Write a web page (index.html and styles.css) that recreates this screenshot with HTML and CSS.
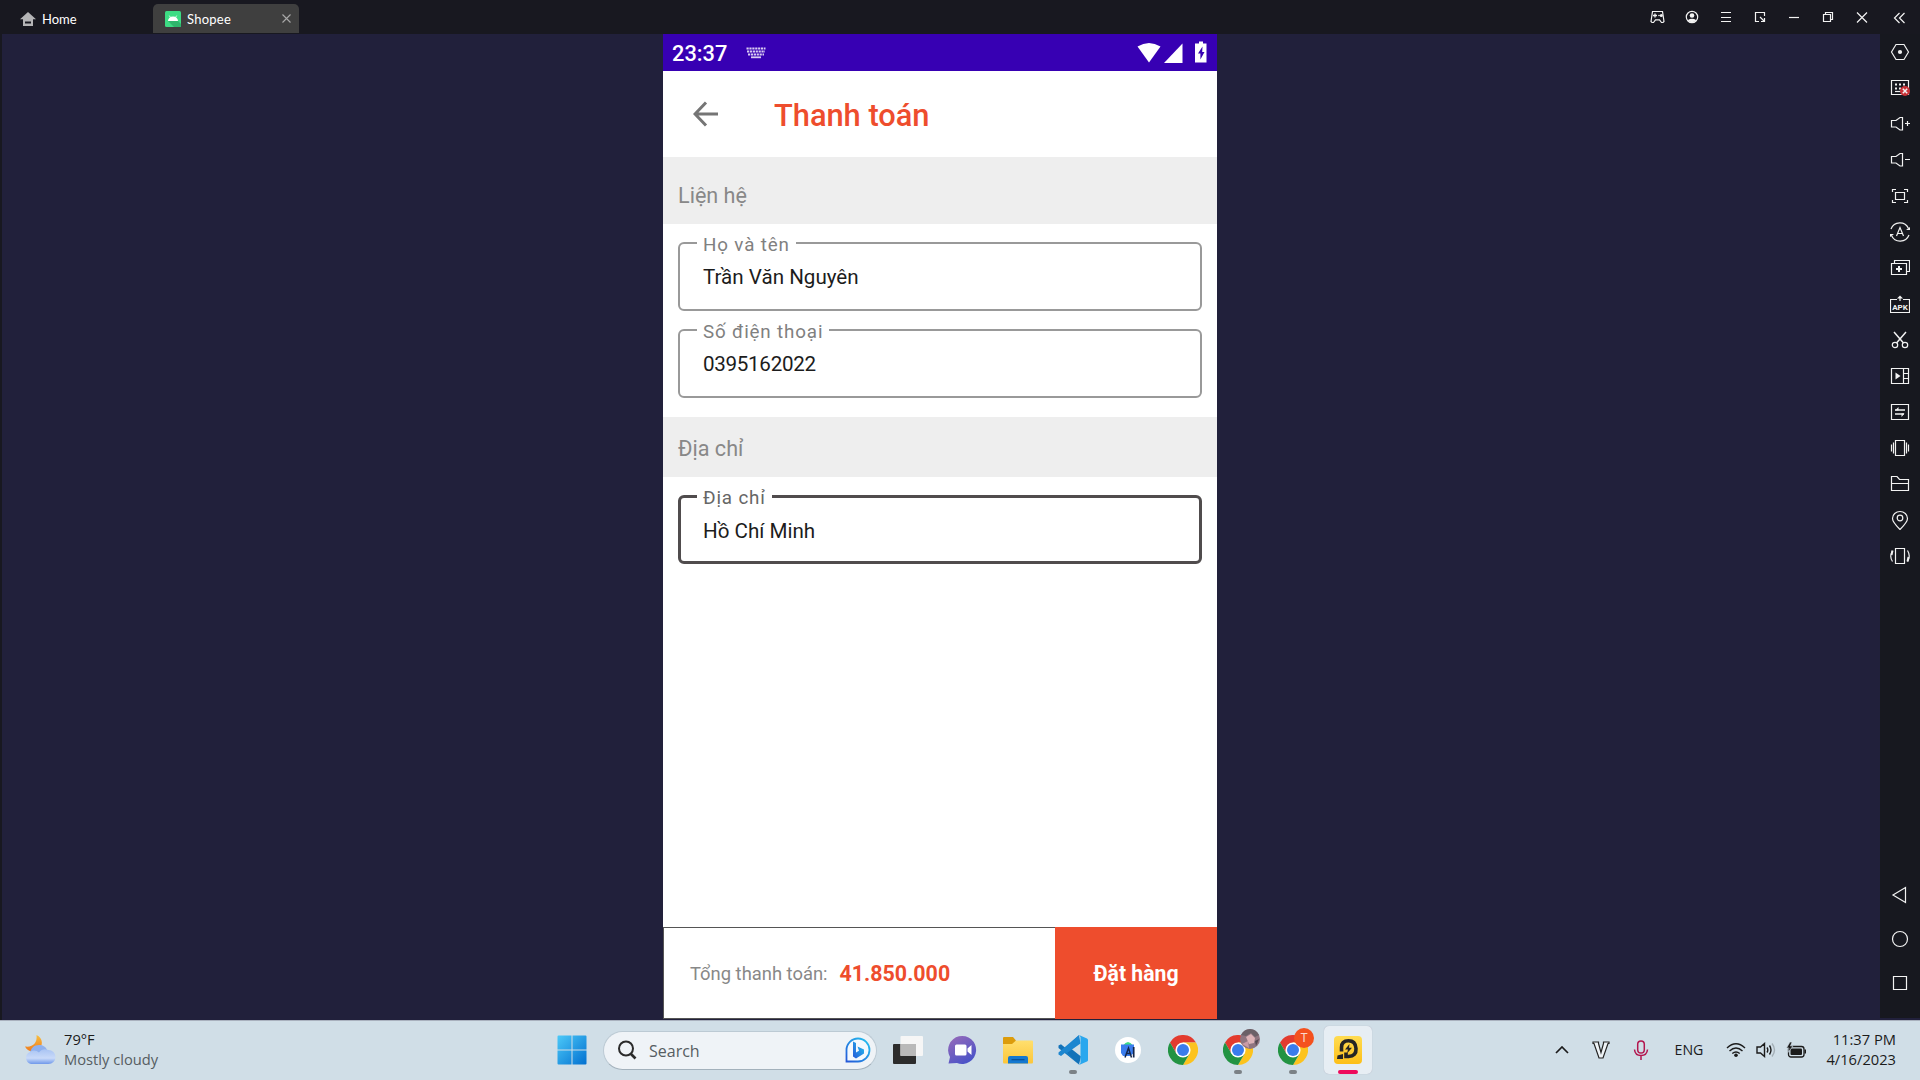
FILE: index.html
```html
<!DOCTYPE html>
<html lang="vi">
<head>
<meta charset="utf-8">
<title>Shopee</title>
<link rel="stylesheet" href="styles.css">
</head>
<body>
<header class="titlebar">
  <div class="home-tab">
    <svg width="16" height="14" viewBox="0 0 16 14"><path d="M8 0 16 7.2H13V14H3V7.2H0Z" fill="#b4b4b6"/><path d="M5 10.5h6" stroke="#181820" stroke-width="2"/></svg>
    <span>Home</span>
  </div>
  <div class="app-tab">
    <svg width="16" height="16" viewBox="0 0 16 16"><rect width="16" height="16" rx="1.5" fill="#3ddc84"/><path d="M3 10 13 10 16 13V16H9Z" fill="#2fb56c"/><path d="M3 10a5 4.6 0 0 1 10 0Z" fill="#fff"/><path d="M4.3 4.6 5.6 6.6M11.7 4.6 10.4 6.6" stroke="#fff" stroke-width=".8"/></svg>
    <span class="app-name">Shopee</span>
    <svg class="tab-close" width="9" height="9" viewBox="0 0 9 9"><path d="M.5.5 8.5 8.5M8.5.5.5 8.5" stroke="#a9a9a9" stroke-width="1.1"/></svg>
  </div>
  <div class="window-tools">
    <svg viewBox="0 0 20 20"><path d="M4.500 4.500H14.500L16 14.500 15 15.500H13.500L11.500 12.800H7.500L5.500 15.500H4L3 14.500Z"/><path d="M5 8.500h4M7 6.500v4" stroke-width="1.300"/><circle class="solid" cx="13.300" cy="8.500" r="1.500"/><circle class="solid" cx="11" cy="8.500" r=".8"/></svg>
    <svg viewBox="0 0 20 20"><circle cx="10" cy="10" r="5.7"/><circle cx="10" cy="8.5" r="2.3" class="solid"/><path class="solid" d="M5.6 13.2Q10 10.3 14.4 13.2 10 17.5 5.6 13.2Z"/></svg>
    <svg viewBox="0 0 20 20"><path d="M5 5.5h10M5 10.5h10M5 14.5h10"/></svg>
    <svg viewBox="0 0 20 20"><path d="M14.5 9V5.5h-9v9H9M10 10l4.5 4.5M14.5 11v3.5H11"/></svg>
    <svg viewBox="0 0 20 20"><path d="M5 10.5h10"/></svg>
    <svg viewBox="0 0 20 20"><path d="M5.5 7.5h7v7h-7zM7.5 7V5.5h7v7H13"/></svg>
    <svg viewBox="0 0 20 20"><path d="M5 5.5l10 10M15 5.5l-10 10"/></svg>
  </div>
  <div class="collapse"><svg viewBox="0 0 20 20"><path d="M9.5 6l-5 5 5 5M14.5 6l-5 5 5 5"/></svg></div>
</header>

<main class="workspace">
  <div class="edge"></div>
  <section class="stage">
    <div class="phone">
      <div class="statusbar">
        <span class="time">23:37</span>
        <svg class="kbd" width="20" height="12" viewBox="0 0 20 12"><path d="M.5 1.5h19M1 4.5h18M2 7.5h16" stroke="#d9ccf2" stroke-width="2.1" stroke-dasharray="2.2 .7"/><path d="M5 10.3h10" stroke="#d9ccf2" stroke-width="1.8"/></svg>
        <svg class="signals" width="72" height="24" viewBox="0 0 72 24" fill="#fff"><path d="M.5 5.500Q12-1.500 23.500 5.500L12 21.500Z"/><path d="M45.500 2.500V22H27Z"/><path d="M62 2.500V.500h4v2h3.500V21.500H58V2.500Z"/><path d="M65.500 5.500 61 12.500h2.400v6L67.500 11h-2.300Z" fill="#3700b3"/></svg>
      </div>
      <div class="appbar">
        <svg width="26" height="26" viewBox="0 0 26 26"><path d="M25 13H2M13 1.500 2 13 13 24.500" fill="none" stroke="#757575" stroke-width="3"/></svg>
        <h1 class="page-title">Thanh toán</h1>
      </div>
      <h2 class="section contact">Liện hệ</h2>
      <fieldset class="field"><legend>Họ và tên</legend><span class="value">Trần Văn Nguyên</span></fieldset>
      <fieldset class="field"><legend>Số điện thoại</legend><span class="value digits">0395162022</span></fieldset>
      <h2 class="section address">Địa chỉ</h2>
      <fieldset class="field focused"><legend>Địa chỉ</legend><span class="value">Hồ Chí Minh</span></fieldset>
      <footer class="checkout">
        <div class="total"><span class="total-label">Tổng thanh toán:</span><strong class="price">41.850.000</strong></div>
        <button class="order">Đặt hàng</button>
      </footer>
    </div>
  </section>
  <aside class="sidebar">
    <div class="tools">
      <svg viewBox="0 0 20 20"><path d="M6 2.500h8L18.500 10 14 17.500H6L1.500 10Z"/><circle cx="10" cy="10" r="2.100" class="solid"/></svg>
      <svg viewBox="0 0 20 20"><path d="M1.500 2.500h17v14h-17z"/><path d="M5 6.500h10M5 10.500h10" stroke-width="2" stroke-dasharray="2 2"/><path d="M5 13.500h6"/><circle cx="15" cy="13" r="5" class="badge"/><path d="M12.800 10.800l4.400 4.400M17.200 10.800l-4.400 4.400" stroke-width="1.500"/></svg>
      <svg viewBox="0 0 20 20"><path d="M1.500 6.500H6L10 3.500H12.500V16H10L6 13H1.500ZM15 9.500h5M17.500 7v5"/></svg>
      <svg viewBox="0 0 20 20"><path d="M1.500 6.500H6L10 3.500H12.500V16H10L6 13H1.500ZM15 9.500h5"/></svg>
      <svg viewBox="0 0 20 20"><path d="M5.500 6.500h9v7h-9zM2.500 6V3.500H6M14 3.500h3.500V6M17.500 14v2.500H14M6 16.500H2.500V14"/></svg>
      <svg viewBox="0 0 20 20"><path d="M1 7A9.500 9.500 0 0 1 18.500 6.500M19 13A9.500 9.500 0 0 1 1.500 13.500M6.500 14 10 5.500 13.500 14M7.800 11.500h4.400"/><path class="solid" d="M16 8h4V5ZM4 12H0v3Z"/></svg>
      <svg viewBox="0 0 20 20"><path d="M1.500 5.500h15v11h-15zM4.500 5.500v-3h15v11h-3"/><path d="M6 11h6M9 8v6" stroke-width="2"/></svg>
      <svg viewBox="0 0 20 20"><path d="M7 5.500H.5v13h19v-13H13M10 7V3"/><path class="solid" d="M7 4.500 10 1.500 13 4.500Z"/><text x="10" y="15.800">APK</text></svg>
      <svg viewBox="0 0 20 20"><path d="M4 2 13.500 13M16 2 6.500 13" stroke-width="1.500"/><circle cx="5" cy="15" r="2.700"/><circle cx="15" cy="15" r="2.700"/></svg>
      <svg viewBox="0 0 20 20"><path d="M1.500 2.500h17v15h-17zM13.500 2.500v15M13.500 7.500h5M13.500 12.500h5"/><path class="solid" d="M5.500 6.500v7l5-3.500Z"/></svg>
      <svg viewBox="0 0 20 20"><path d="M1.500 2.500h17v15h-17z"/><path d="M5 8h10M5 12h9" stroke-width="1.600"/><path class="solid" d="M5 8.500 8.500 5v3.500ZM14.500 11.500 11.500 15v-3.500Z"/></svg>
      <svg viewBox="0 0 20 20"><path d="M5.500 2.500h9v15h-9zM3.500 4.500v11M16.500 4.500v11M1.500 6.500v7M18.500 6.500v7"/></svg>
      <svg viewBox="0 0 20 20"><path d="M1.500 16.500v-14H7L9.500 5.500h9v11zM1.500 9.500h17"/></svg>
      <svg viewBox="0 0 20 20"><path d="M10 19.500Q2.500 12 2.500 8.500a7.500 7 0 0 1 15 0Q17.500 12 10 19.500Z"/><circle cx="10" cy="8" r="2.800"/></svg>
      <svg viewBox="0 0 20 20"><path d="M5.500 2.500h9v15h-9zM2.500 15.500Q-1 10 2.500 5M17.500 4.500Q21 10 17.500 15.500"/><path d="M1.500 9 2.500 4.500M18.500 11 17.500 15.500" stroke-width="2"/></svg>
    </div>
    <div class="nav">
      <svg viewBox="0 0 20 20"><path d="M15.500 2.500v15L3 10Z"/></svg>
      <svg viewBox="0 0 20 20"><circle cx="10" cy="10" r="7.500"/></svg>
      <svg viewBox="0 0 20 20"><path d="M3.500 3.500h13v13h-13z"/></svg>
    </div>
  </aside>
</main>

<footer class="taskbar">
  <div class="weather">
    <svg width="32" height="32" viewBox="0 0 32 32"><defs><linearGradient id="moon" x2="0" y2="1"><stop stop-color="#f8bf3e"/><stop offset="1" stop-color="#ee7a1e"/></linearGradient><linearGradient id="cloud" x2="0" y2="1"><stop stop-color="#a9c4f3"/><stop offset=".6" stop-color="#c9daf9"/><stop offset="1" stop-color="#6f98ea"/></linearGradient></defs><path d="M12.500 1C19 4 20 12 13.500 16 8 19 3 17 1 12.500 9 13.500 13.500 9 12.500 1Z" fill="url(#moon)"/><path d="M6 21C6 14 10 11 15 11 19 11 22 13 23 16L14 26Z" fill="#8fb1ee"/><path d="M7 30A6.300 6.300 0 0 1 6 18 7.500 7.500 0 0 1 15 18.500 8 8 0 0 1 24.500 16 7 7 0 0 1 24.500 30Z" fill="url(#cloud)"/></svg>
    <div class="weather-text"><span>79°F</span><span class="dim">Mostly cloudy</span></div>
  </div>
  <div class="task start"><svg width="30" height="30" viewBox="0 0 30 30"><defs><linearGradient id="win" x2="1" y2="1"><stop stop-color="#4cc9f8"/><stop offset="1" stop-color="#0270d0"/></linearGradient></defs><path fill="url(#win)" d="M.5 1.500Q.5.500 1.500.500H14.500V14.500H.5ZM15.500.500H28.500Q29.500.500 29.500 1.500V14.500H15.500ZM.5 15.500H14.500V29.500H1.500Q.5 29.500.5 28.500ZM15.500 15.500H29.500V28.500Q29.500 29.500 28.500 29.500H15.500Z"/></svg></div>
  <div class="search">
    <svg width="20" height="20" viewBox="0 0 20 20"><circle cx="9" cy="8.500" r="7" fill="none" stroke="#2b2b2b" stroke-width="2"/><path d="M13.500 13.500 18.500 18.500" stroke="#2b2b2b" stroke-width="2.600"/></svg>
    <span class="search-label dim">Search</span>
    <svg class="bing" width="26" height="26" viewBox="0 0 26 26"><defs><linearGradient id="bing" x1="1" x2="0" y2="1"><stop stop-color="#25c4f0"/><stop offset="1" stop-color="#2458d8"/></linearGradient></defs><path d="M1.500 24.500V13A11.500 11.500 0 1 1 13 24.500Z" fill="#f4f9fe" stroke="url(#bing)" stroke-width="1.800"/><path d="M8 4.500 11 6V15.500L14 13.800 12.500 9.500 19 12.500V16.500L11 21.500 8 19.500Z" fill="url(#bing)"/></svg>
  </div>
  <div class="task"><svg width="32" height="30" viewBox="0 0 32 30"><rect x="1" y="9" width="23" height="20" rx="1" fill="#2c2c2c"/><rect x="8.500" y="1" width="22.500" height="20" rx="1" fill="#f6f6f6"/><path d="M8.500 9H24V21H8.500Z" fill="#b9b9b9"/></svg></div>
  <div class="task"><svg width="30" height="30" viewBox="0 0 30 30"><defs><linearGradient id="chat" x1="0" x2=".6" y2="1"><stop stop-color="#9a6bb8"/><stop offset="1" stop-color="#4b53c8"/></linearGradient></defs><path d="M.5 28.500 2 22A14 14 0 1 1 9 28Z" fill="url(#chat)"/><rect x="7" y="9.500" width="11.500" height="11" rx="1.500" fill="#fff"/><path d="M19.500 13.500 23.500 10V20L19.500 16.500Z" fill="#fff"/></svg></div>
  <div class="task"><svg width="32" height="30" viewBox="0 0 32 30"><defs><linearGradient id="fold" x2="0" y2="1"><stop stop-color="#ffdf6e"/><stop offset="1" stop-color="#fcc63a"/></linearGradient></defs><path d="M1 3Q1 2 2 2H11L14 5.500V12H1Z" fill="#dc9c0c"/><path d="M1 9H10L14 5.500H30Q31 5.500 31 6.500V27Q31 28.500 30 28.500H2Q1 28.500 1 27Z" fill="url(#fold)"/><path d="M6 28.500V23Q6 21 8 21H24Q26 21 26 23V28.500Z" fill="#1478d0"/><path d="M9.500 24.700h13" stroke="#074d93" stroke-width="1.200"/></svg></div>
  <div class="task running"><svg width="30" height="30" viewBox="0 0 30 30"><path d="M21 0 7.500 13 3 9.200.5 10.500V13L21 29.500 23 21.500 11 12Z" fill="#1272b9"/><path d="M21 30 7.500 17.500 3 21 .5 19.500V17.500L21 0 22.500 8.500 9 18Z" fill="#1c86d0"/><path d="M21 0 29 3.500Q30 4 30 5V25Q30 26 29 26.500L21 30 22.500 28V2Z" fill="#2aa7ee"/></svg></div>
  <div class="task"><svg width="30" height="30" viewBox="0 0 30 30"><circle cx="15" cy="15" r="13" fill="#fff"/><path d="M10 10.500Q15 3.500 20 10.500Z" fill="#3ddc84"/><path d="M8 9.500H21V18L17 21H10L8 18Z" fill="#3b7ded"/><path d="M12 22.500 15.500 13 18.500 22.500M13.500 18.500h4" fill="none" stroke="#14264a" stroke-width="1.500"/><path d="M20.700 12v10.500" stroke="#14264a" stroke-width="1.700"/></svg></div>
  <div class="task"><svg width="30" height="30" viewBox="0 0 30 30"><g id="chrome"><path d="M2 7.500A15 15 0 0 1 28 7.500H15L8.500 18.750Z" fill="#e33b2e"/><path d="M28 7.500A15 15 0 0 1 15 30L21.500 18.750 15 7.500Z" fill="#fcc31e"/><path d="M15 30A15 15 0 0 1 2 7.500L8.500 18.750H21.500Z" fill="#229342"/><circle cx="15" cy="15" r="7.600" fill="#fff"/><circle cx="15" cy="15" r="6" fill="#3a7cec"/></g></svg></div>
  <div class="task running"><svg width="30" height="30" viewBox="0 0 30 30"><use href="#chrome"/></svg>
    <svg class="profile" width="22" height="22" viewBox="0 0 22 22"><circle cx="11" cy="11" r="10" fill="#8f7580"/><path d="M2 7Q5 1 11 1T20 7L16 9 12 5 7 8Z" fill="#6a6067"/><path d="M7 9 12 6 16 10 15 15 10 16Z" fill="#dcb2b6"/><path d="M3 16 9 13 10 20Z" fill="#c99ba5"/><path d="M16 13 20 11 17 18Z" fill="#554a51"/></svg></div>
  <div class="task running"><svg width="30" height="30" viewBox="0 0 30 30"><use href="#chrome"/></svg><span class="profile initial">T</span></div>
  <div class="task active"><svg width="30" height="30" viewBox="0 0 30 30"><defs><linearGradient id="ld" x2="0" y2="1"><stop stop-color="#ffdc52"/><stop offset="1" stop-color="#fdbf18"/></linearGradient></defs><rect x="1" y="1" width="28" height="28" rx="4" fill="url(#ld)"/><path d="M8.500 16.500V12.500Q8.500 5.800 15.500 5.800T23 13.500 15.500 21.500H13V17.500" fill="none" stroke="#252525" stroke-width="3.600"/><path d="M16.500 9 12 14.500H15L14 18.500 19 12.800H16Z" fill="#252525"/><path d="M4.500 20.500 10 19V24H4Z" fill="#252525"/></svg></div>
  <div class="tray">
    <svg width="14" height="8" viewBox="0 0 14 8"><path d="M1 7 7 1 13 7" fill="none" stroke="#1b1b1b" stroke-width="1.700"/></svg>
    <svg class="vkey" width="18" height="18" viewBox="0 0 18 18"><path d="M1 1H6.500V2.500L9 11.500 11.500 2.500V1H17V2.500H16L11 17H7L2 2.500H1Z" fill="#eef3f6" stroke="#222" stroke-width="1.200"/></svg>
    <svg class="mic" width="16" height="20" viewBox="0 0 16 20"><rect x="4.700" y="1" width="6.600" height="12" rx="3.300"/><path d="M1.500 9.500Q2 15.500 8 15.500T14.500 9.500M8 15.500V20"/></svg>
    <span class="lang">ENG</span>
    <svg class="wifi" width="20" height="16" viewBox="0 0 20 16"><path d="M1 6Q10-2.500 19 6M3.500 9Q10 2.800 16.500 9M6.300 11.500Q10 8.300 13.700 11.500"/><circle cx="10" cy="13.300" r="1.800" fill="#1b1b1b" stroke="none"/></svg>
    <svg class="vol" width="20" height="16" viewBox="0 0 20 16"><path d="M1 5H4.500L8.500 1.500V14.500L4.500 11H1ZM11 5.500Q12.600 8 11 10.500M13.500 3.500Q16.500 8 13.500 12.500"/><path d="M16 1.500Q21 8 16 14.500" stroke="#a4afb6"/></svg>
    <svg class="bat" width="21" height="17" viewBox="0 0 21 17"><rect x="2.500" y="4.500" width="15.500" height="10.500" rx="2.500" fill="none" stroke="#1b1b1b" stroke-width="1.300"/><rect x="4.500" y="6.500" width="11.500" height="6.500" rx="1" fill="#1b1b1b"/><path d="M18.500 7.500h1.500v4h-1.500Z" fill="#1b1b1b"/><path d="M4 0 .5 6H3L2 10.500 7 4H4.500L6 0Z" fill="#1b1b1b" stroke="#d0dee7" stroke-width=".6"/></svg>
    <div class="clock"><span>11:37 PM</span><span>4/16/2023</span></div>
  </div>
</footer>
</body>
</html>
```
FILE: styles.css
```css
* { box-sizing: border-box; }
body { margin: 0; width: 1920px; height: 1080px; overflow: hidden; display: flex; flex-direction: column; background: #21203b; font-family: "Open Sans", "Noto Sans", sans-serif; }
svg { display: block; flex: none; }
h1, h2 { margin: 0; font-weight: 400; }

/* Emulator title bar */
.titlebar { height: 34px; flex: none; display: flex; background: #181820; color: #fff; font-family: Lato, sans-serif; font-size: 13px; }
.home-tab { width: 153px; padding: 3px 0 0 20px; display: flex; align-items: center; gap: 6px; }
.app-tab { width: 146px; height: 29px; margin-top: 4px; padding: 0 8px 0 12px; display: flex; align-items: center; gap: 6px; background: #3f3f3f; border-radius: 5px 5px 0 0; }
.app-name { letter-spacing: .25px; }
.tab-close { margin-left: auto; }
.window-tools { margin-left: auto; display: flex; gap: 14px; align-items: center; padding-right: 8px; }
.window-tools svg, .collapse svg, .sidebar svg { width: 20px; height: 20px; fill: none; stroke: #f2f2f2; stroke-width: 1.2; }
.collapse { width: 40px; display: flex; align-items: center; justify-content: center; }
.window-tools .solid, .sidebar .solid { fill: #f2f2f2; stroke: none; }

/* Stage and tool sidebar */
.workspace { height: 986px; flex: none; display: flex; }
.edge { width: 2px; background: #181820; }
.stage { flex: 1; display: flex; padding-left: 661px; }
.sidebar { width: 40px; height: 984px; background: #17181f; display: flex; flex-direction: column; justify-content: space-between; padding-bottom: 13px; }
.tools, .nav { display: grid; justify-items: center; align-items: center; grid-auto-rows: 36px; }
.nav { grid-auto-rows: 44px; }
.sidebar .badge { fill: #c93237; stroke: none; }
.sidebar text { fill: #f2f2f2; stroke: none; font: 700 8px Roboto, sans-serif; text-anchor: middle; }

/* Phone screen */
.phone { width: 554px; height: 985px; background: #fff; display: flex; flex-direction: column; font-family: Roboto, sans-serif; }
.statusbar { height: 37px; flex: none; background: #3700b3; color: #fff; display: flex; align-items: center; padding: 0 8px 0 9px; font-size: 21.8px; font-weight: 500; }
.time { padding-top: 1px; }
.kbd { margin-left: 19px; }
.signals { margin-left: auto; }
.appbar { height: 86px; flex: none; display: flex; align-items: center; padding-left: 30px; gap: 55px; }
.page-title { color: #ee4d2d; font-size: 30.8px; font-weight: 500; padding-top: 2px; }
.section { flex: none; background: #eee; color: #888; font-size: 21.6px; padding-left: 15px; display: flex; align-items: center; }
.contact { height: 67px; padding-top: 9px; }
.address { height: 60px; margin-top: 19px; padding-top: 3px; }
.field { height: 80px; flex: none; margin: 7px 15px 0; padding: 0 0 0 17px; border: 2px solid #999; border-radius: 6px; }
.field legend { height: 24px; padding: 4px 6px 0; font-size: 18.8px; line-height: 20px; color: #808080; letter-spacing: .85px; }
.field .value { display: block; width: max-content; margin-left: 6px; font-size: 20.6px; line-height: 24px; padding-top: 10px; color: #1c1c1c; }
.field .digits { letter-spacing: -.3px; }
.focused { border: 3px solid #504c4d; padding-left: 16px; }
.focused legend { height: 25px; color: #666; }
.checkout { height: 92px; margin-top: auto; display: flex; }
.total { flex: 1; border: 1px solid #555; border-right: 0; display: flex; align-items: center; padding-left: 26px; gap: 12px; }
.total-label { font-size: 18.4px; color: #888; padding-top: 1px; }
.price { color: #ee4d2d; font-size: 21.4px; padding-top: 1px; }
.order { width: 162px; border: 0; padding: 1px 0 0; background: #ee4d2d; color: #fff; font: 700 21.2px Roboto, sans-serif; }

/* Windows taskbar */
.taskbar { height: 60px; flex: none; display: flex; align-items: center; gap: 7px; padding-bottom: 1px; background: #d0dee7; border-top: 1px solid #a9b1be; color: #1b1b1b; font-size: 14.7px; line-height: 20px; }
.dim { color: #565d62; }
.weather { width: 541px; display: flex; align-items: center; padding-left: 24px; gap: 8px; }
.weather-text { display: flex; flex-direction: column; align-items: flex-start; padding-bottom: 3px; }
.task { width: 48px; height: 48px; flex: none; display: grid; place-items: center; position: relative; border-radius: 5px; }
.search { width: 274px; height: 39px; border-radius: 20px; background: #eff3f7; border: 1px solid #bccad4; border-bottom-color: #a3b1bc; display: flex; align-items: center; padding: 0 5px 0 13px; gap: 12px; }
.search-label { font-size: 16px; padding-top: 1px; }
.bing { margin-left: auto; }
.running::after, .active::after { content: ""; position: absolute; bottom: 0; left: 20px; width: 8px; height: 4px; border-radius: 2px; background: #7b8186; }
.active { background: #e7eef4; box-shadow: 0 0 1px #aab; }
.active::after { left: 14px; width: 20px; background: #ee0a5c; }
.profile { position: absolute; left: 25px; top: 2px; }
.initial { width: 20px; height: 20px; border-radius: 50%; background: #f4511e; color: #fbd9cd; font: 12px/20px Roboto, sans-serif; text-align: center; }
.tray { margin-left: auto; padding-right: 24px; display: flex; align-items: center; }
.vkey { margin-left: 23px; }
.mic { margin-left: 23px; fill: none; stroke: #b3164f; stroke-width: 1.5; }
.lang { margin-left: 26px; font-size: 14.2px; }
.wifi { margin-left: 23px; }
.vol { margin-left: 10px; }
.wifi, .vol { fill: none; stroke: #1b1b1b; stroke-width: 1.4; }
.bat { margin-left: 10px; }
.clock { margin-left: 19px; display: flex; flex-direction: column; align-items: flex-end; padding-bottom: 3px; }
```
